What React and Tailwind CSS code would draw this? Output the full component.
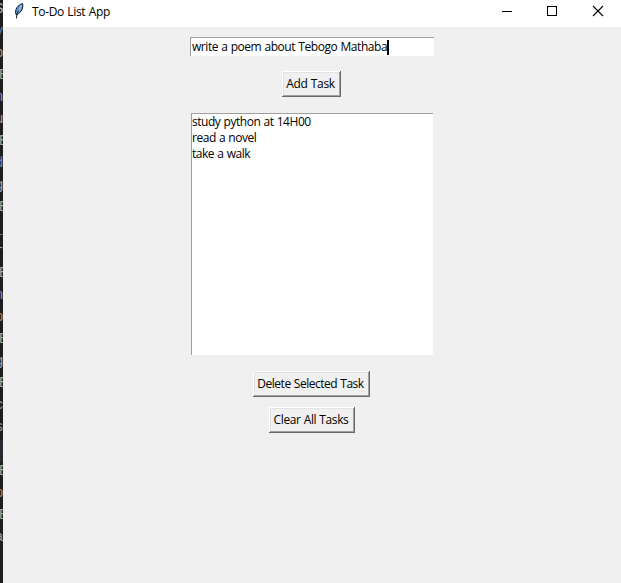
const tasks = ["study python at 14H00", "read a novel", "take a walk"];

const editorLines = ["S", "v", "b", "E", "n", "u", "E", "d", "g", "E", "_", "r", "E", "n", "p", "E", "g", "E", "c", "s", "", "E", "p", "E", "a", ""];
const lineColors = {
  E: "text-[#b5a68e]",
  S: "text-[#a8bcc8]",
  v: "text-[#5b7fb7]",
  n: "text-[#7f9fc0]",
  d: "text-[#5b93c7]",
  g: "text-[#8fb0b8]",
  p: "text-[#b98a5c]",
};

function Button({ children, className }) {
  return (
    <button
      className={`flex h-[26px] shrink-0 items-center justify-center whitespace-nowrap bg-[#f0f0f0] pr-[2px] [word-spacing:0.5px] shadow-[inset_-1px_-1px_#696969,inset_1px_1px_#ffffff,inset_-2px_-2px_#a0a0a0,inset_2px_2px_#e3e3e3] ${className}`}
    >
      {children}
    </button>
  );
}

function Feather() {
  return (
    <svg className="ml-[10px] h-4 w-3 shrink-0" viewBox="0 0 12 16">
      <path d="M3 11.5C1.4 7 4.5 2 9.5.5 10.7 4 8.5 9.5 4 11.5Z" fill="#5a91d0" stroke="#101820" strokeWidth="1" />
      <path d="M8.3 2C7.6 5 6 8 4.2 10.2" stroke="#8cbcf2" strokeWidth="1.8" fill="none" />
      <path d="M5.6 7.5 3.8 11.5 3.5 15.4" stroke="#101820" strokeWidth="1" fill="none" />
    </svg>
  );
}

export default function App() {
  return (
    <div className="flex h-[583px] w-[621px] overflow-hidden bg-[#f0f0f0] font-['Open_Sans','Noto_Sans',sans-serif] text-[12px] leading-4 text-black">
      <div className="w-[3px] shrink-0 overflow-hidden bg-[#1e1e1e] font-['Liberation_Mono',monospace] text-[14px]">
        {editorLines.map((line, i) => (
          <div key={i} className={`h-[22px] leading-[18px] ${i === 20 ? "bg-[#2a2a31]" : ""} ${lineColors[line] ?? "text-[#a9a08c]"}`}>
            <span className={line === "E" ? "-ml-px" : "-ml-[5px]"}>{line}</span>
          </div>
        ))}
      </div>
      <div className="flex w-[618px] flex-col">
        <header className="flex h-[27px] shrink-0 items-start bg-white pt-[3px]">
          <Feather />
          <span className="ml-[7px] mt-px whitespace-nowrap tracking-[-0.33px] [word-spacing:0.6px]">To-Do List App</span>
          <svg className="ml-auto mr-[17px] mt-[2px] h-3 w-[103px] shrink-0" viewBox="0 0 103 12" fill="none" stroke="#000" shapeRendering="crispEdges">
            <path d="M1 6.5H11" />
            <path d="M46.5 1.5h9v9h-9z" />
            <path d="M92 1 102 11M102 1 92 11" shapeRendering="auto" strokeWidth="1.1" />
          </svg>
        </header>
        <main className="flex flex-col items-center">
          <div className="mt-[10px] flex h-[19px] w-[244px] items-center border-l border-t border-[#a0a0a0] bg-white pl-px">
            <span className="whitespace-nowrap tracking-[-0.44px] [word-spacing:0.5px]">write a poem about Tebogo Mathaba</span>
            <span className="h-[15px] w-[2px] shrink-0 bg-black" />
          </div>
          <Button className="mr-px mt-[15px] w-[59px] tracking-[-0.34px]">Add Task</Button>
          <ul className="mt-4 h-[242px] w-[242px] border-l border-t border-[#a0a0a0] bg-white">
            {tasks.map((task) => (
              <li key={task} className="h-4 whitespace-nowrap tracking-[-0.46px] [word-spacing:0.5px]">{task}</li>
            ))}
          </ul>
          <Button className="mr-px mt-4 w-[117px] tracking-[-0.48px]">Delete Selected Task</Button>
          <Button className="mt-[10px] w-[86px] tracking-[-0.4px]">Clear All Tasks</Button>
        </main>
      </div>
    </div>
  );
}
